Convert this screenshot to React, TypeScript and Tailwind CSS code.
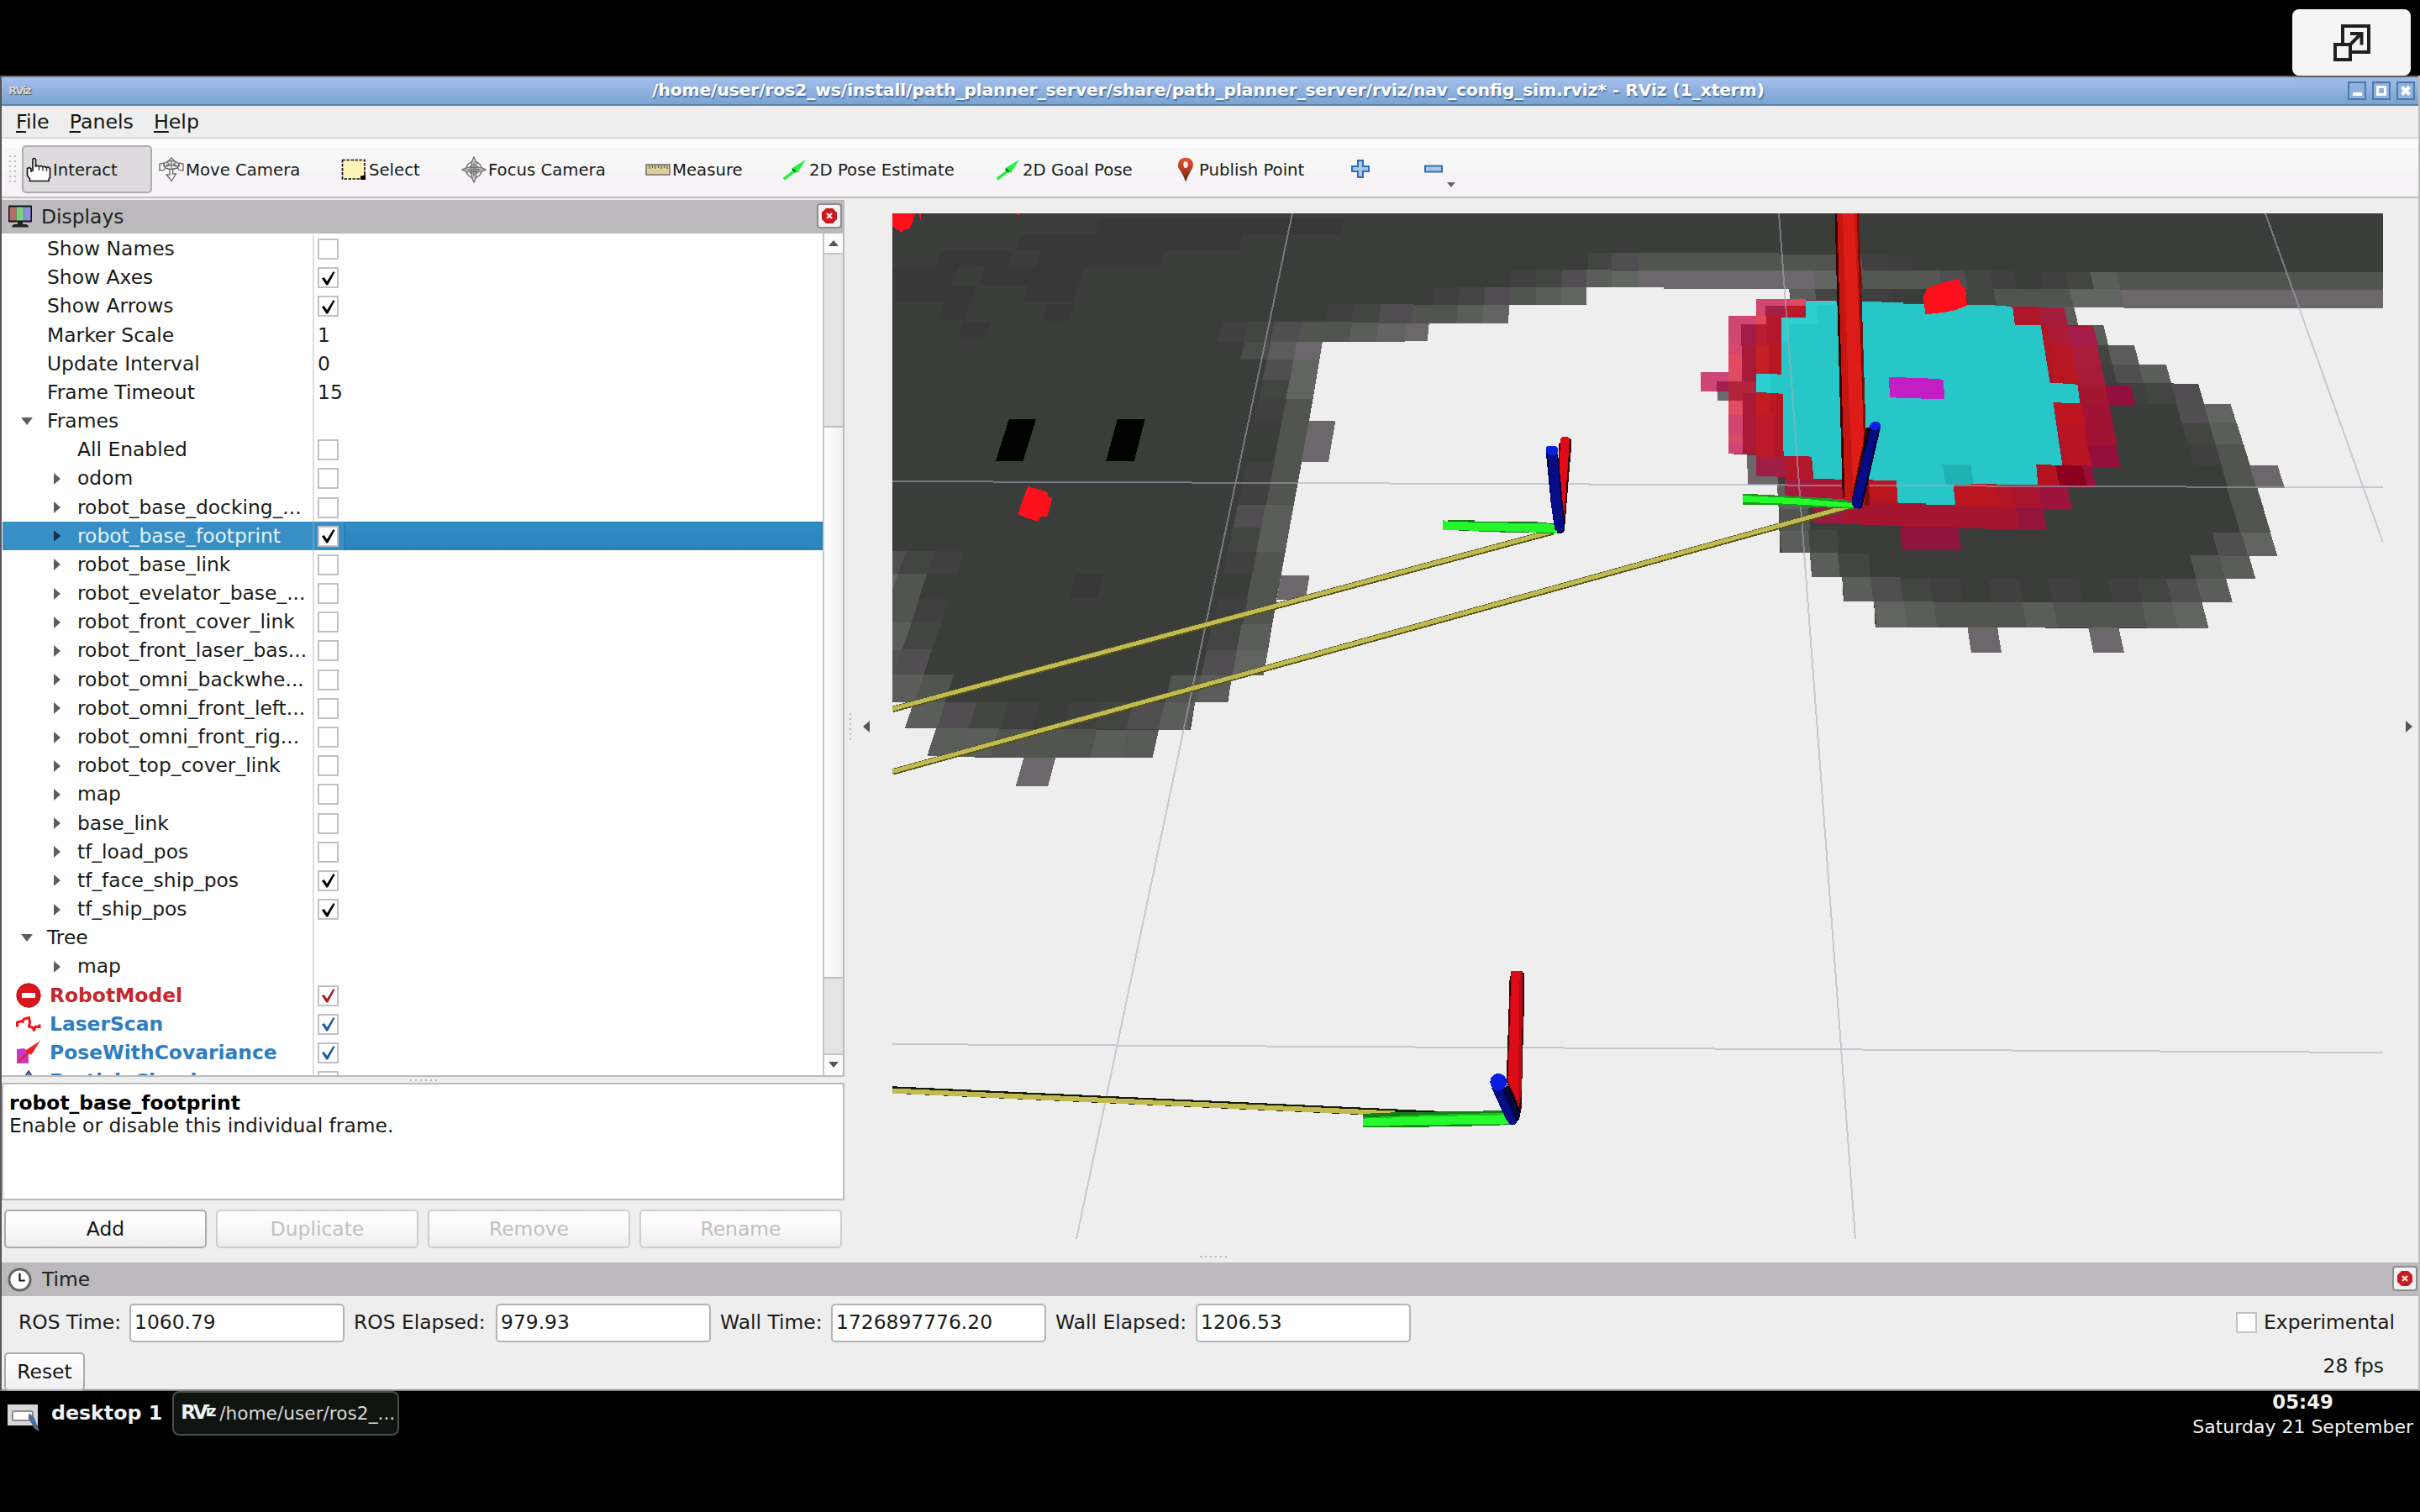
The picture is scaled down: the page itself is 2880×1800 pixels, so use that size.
import React from "react";

type Pt = [number, number];

const A = "#414041";
const B = "#434542";
const C = "#504e50";
const D = "#525450";
const E = "#5b5d5a";
const F = "#616461";
const G = "#6b676b";
const DARK = "#3b3d3a";
const DEEP = "#383838";

/* ---------- small widgets ---------- */

function Check({ on, tone = "#000" }: { on?: boolean; tone?: string }) {
  return (
    <span className="flex h-[25px] w-[25px] shrink-0 items-center justify-center border-2 border-[#c3c1c3] bg-white">
      {on && (
        <svg viewBox="0 0 20 20" className="h-[20px] w-[20px]">
          <path d="M2 10.500 L4.600 9 L8.200 14 L15.500 2.200 L17.600 3 L9.200 18.600 H7.400 Z" fill={tone} />
        </svg>
      )}
    </span>
  );
}

function CloseBtn() {
  return (
    <span className="mb-[2px] flex h-[30px] w-[30px] items-center justify-center rounded-[4px] border-2 border-[#8f8d8f] bg-[#f3f1f3]">
      <svg viewBox="0 0 20 20" className="h-[20px] w-[20px]">
        <path d="M6 1h8l5 5v8l-5 5H6l-5-5V6z" fill="#c81b1f" />
        <path d="M7 7l6 6M13 7l-6 6" stroke="#f5dede" strokeWidth="2.400" />
      </svg>
    </span>
  );
}

function PushBtn({ label, off, w }: { label: string; off?: boolean; w: string }) {
  return (
    <button
      className={`flex h-[46px] items-center justify-center rounded-[5px] border-2 bg-linear-to-b from-white via-[#fbf8fb] to-[#eeeeee] ${w} ${
        off ? "border-[#cfcdcf] text-[#bcc2bc]" : "border-[#acaaac] text-[#141714]"
      }`}
    >
      {label}
    </button>
  );
}

/* ---------- tool icons ---------- */

const HandIcon = (
  <svg viewBox="0 0 30 30" className="h-[30px] w-[30px]">
    <path
      d="M8 17V3.500Q8 1.500 9.700 1.500T11.500 3.500V11l1.500-1 2.500 1.200 2-.7 2.500 1.200 2-.5 2.500 1.300 2-.5 2 1.500V24l-1.500 2.500V28.500H4.500V26L1.500 22V13.500L4 12.500L6 14V18"
      fill="#fff"
      stroke="#1a1a1a"
      strokeWidth="1.700"
    />
    <path d="M15.500 11v5M20 11.500v5M24.500 12.500v4.500" stroke="#333" strokeWidth="1.400" />
  </svg>
);

const MoveIcon = (
  <svg viewBox="0 0 30 30" className="h-[30px] w-[30px]" fill="#f6f6f6" stroke="#6c6c6c" strokeWidth="1.300">
    <path d="M15 1l5.500 5.500-2.500 1v3l6 .5V7l5 1v8l-5-.5-1.500-2.500-5.500 1-.5 6h4L15 28.500 9 21h4v-6L7.500 13 6 15.500 1 16V8l5-1v4l6-.5v-3l-2.500-1z" />
    <ellipse cx="15" cy="9.500" rx="9" ry="5" fill="none" />
    <path d="M9 9.500h12M15 5v9" />
  </svg>
);

const SelectIcon = (
  <svg viewBox="0 0 30 26" className="h-[26px] w-[30px]">
    <rect x="1.500" y="1.500" width="26.500" height="22.500" fill="#fdf2b8" stroke="#111" strokeWidth="1.700" strokeDasharray="3.500 1.500" />
    <path d="M29 18v7h-6v-4.500q4 0 6-2.500z" fill="#000" />
  </svg>
);

const FocusIcon = (
  <svg viewBox="0 0 30 32" className="h-[32px] w-[30px]" fill="none" stroke="#777" strokeWidth="1.500">
    <circle cx="15" cy="16" r="9.500" />
    <circle cx="15" cy="16" r="5.500" />
    <path d="M15 1l2.500 6v18L15 31l-2.500-6V7zM1 16l6-2.500h16l6 2.500-6 2.500H7z" fill="#dcdcdc" fillOpacity=".6" />
    <path d="M15 8v16M7 16h16" />
  </svg>
);

const MeasureIcon = (
  <svg viewBox="0 0 30 14" className="h-[14px] w-[30px]">
    <rect x="1" y="1" width="28" height="12" fill="#dccf98" stroke="#77736a" strokeWidth="1.600" />
    <path d="M5 2v4M8.500 2v3M12 2v4M15.500 2v3M19 2v4M22.500 2v3M26 2v4" stroke="#5d5a50" strokeWidth="1.200" />
  </svg>
);

const PoseIcon = (
  <svg viewBox="0 0 30 26" className="h-[26px] w-[30px]">
    <path d="M28 1L11 11.500 13 13.500 .5 23 3 25.500 16 15.500l2 1.500z" fill="#24f23c" />
    <path d="M13 11.500l3.500 3.500-1 1.500-4.500-3.500z" fill="#0b5f16" />
  </svg>
);

const PinIcon = (
  <svg viewBox="0 0 20 30" className="h-[30px] w-[20px]">
    <defs>
      <linearGradient id="pin" x1="0" y1="0" x2="0" y2="1">
        <stop offset="0" stopColor="#e8502f" />
        <stop offset=".5" stopColor="#b23d22" />
        <stop offset="1" stopColor="#4a2a12" />
      </linearGradient>
    </defs>
    <path d="M10 29.500Q7 21 3.500 16T1 9.500Q1.500 1 10 .8 18.500 1 19 9.500q-.2 3-2.500 6.500T10 29.500z" fill="url(#pin)" />
    <ellipse cx="10" cy="9" rx="2.800" ry="4" fill="#f7e9e4" />
  </svg>
);

function Tool({ icon, label, cls, gap = "gap-[2px]" }: { icon: React.ReactNode; label: string; cls: string; gap?: string }) {
  return (
    <div className={`flex h-[57px] shrink-0 items-center whitespace-nowrap rounded-[5px] border-2 pl-[3px] pt-[1px] ${gap} ${cls}`}>
      {icon}
      <span className="pt-[1px]">{label}</span>
    </div>
  );
}

/* ---------- displays tree ---------- */

type Row = {
  t: string;
  lvl: 0 | 1 | 2;
  arrow?: "open" | "shut";
  v?: string;
  c?: 0 | 1;
  sel?: boolean;
  icon?: "err" | "laser" | "pose" | "cloud";
};

const rows: Row[] = [
  { t: "Show Names", lvl: 1, c: 0 },
  { t: "Show Axes", lvl: 1, c: 1 },
  { t: "Show Arrows", lvl: 1, c: 1 },
  { t: "Marker Scale", lvl: 1, v: "1" },
  { t: "Update Interval", lvl: 1, v: "0" },
  { t: "Frame Timeout", lvl: 1, v: "15" },
  { t: "Frames", lvl: 1, arrow: "open" },
  { t: "All Enabled", lvl: 2, c: 0 },
  { t: "odom", lvl: 2, arrow: "shut", c: 0 },
  { t: "robot_base_docking_...", lvl: 2, arrow: "shut", c: 0 },
  { t: "robot_base_footprint", lvl: 2, arrow: "shut", c: 1, sel: true },
  { t: "robot_base_link", lvl: 2, arrow: "shut", c: 0 },
  { t: "robot_evelator_base_...", lvl: 2, arrow: "shut", c: 0 },
  { t: "robot_front_cover_link", lvl: 2, arrow: "shut", c: 0 },
  { t: "robot_front_laser_bas...", lvl: 2, arrow: "shut", c: 0 },
  { t: "robot_omni_backwhe...", lvl: 2, arrow: "shut", c: 0 },
  { t: "robot_omni_front_left...", lvl: 2, arrow: "shut", c: 0 },
  { t: "robot_omni_front_rig...", lvl: 2, arrow: "shut", c: 0 },
  { t: "robot_top_cover_link", lvl: 2, arrow: "shut", c: 0 },
  { t: "map", lvl: 2, arrow: "shut", c: 0 },
  { t: "base_link", lvl: 2, arrow: "shut", c: 0 },
  { t: "tf_load_pos", lvl: 2, arrow: "shut", c: 0 },
  { t: "tf_face_ship_pos", lvl: 2, arrow: "shut", c: 1 },
  { t: "tf_ship_pos", lvl: 2, arrow: "shut", c: 1 },
  { t: "Tree", lvl: 1, arrow: "open" },
  { t: "map", lvl: 2, arrow: "shut" },
  { t: "RobotModel", lvl: 0, c: 1, icon: "err" },
  { t: "LaserScan", lvl: 0, c: 1, icon: "laser" },
  { t: "PoseWithCovariance", lvl: 0, c: 1, icon: "pose" },
  { t: "ParticleCloud", lvl: 0, c: 0, icon: "cloud" },
];

function RowIcon({ k }: { k: NonNullable<Row["icon"]> }) {
  return (
    <svg viewBox="0 0 30 30" className="h-[30px] w-[30px] shrink-0">
      {k === "err" && (
        <>
          <circle cx="15" cy="15" r="14.200" fill="#d8161c" stroke="#b01015" />
          <rect x="7" y="12" width="16" height="6" rx="1" fill="#fff" />
        </>
      )}
      {k === "laser" && (
        <path d="M1.500 18.500V13L6 11.500l2 1L9.500 9l6-1.500 1 5-1 5.500 5 1.500 1 4 1-4 1-1.500 4.500.5v-3" fill="none" stroke="#f8131a" strokeWidth="3" />
      )}
      {k === "pose" && (
        <>
          <path d="M1 11l9-1 5 5v13H1z" fill="#c23cc8" />
          <path d="M29 1L12 12l1 3L2 25l2 1.500 11.500-10 3 1z" fill="#ee2222" />
        </>
      )}
      {k === "cloud" && <path d="M15 2L23 14 15 28 7 14z" fill="#7088bd" stroke="#2c3f70" strokeWidth="1.500" />}
    </svg>
  );
}

function TreeRow({ r }: { r: Row }) {
  const tone = r.icon === "err" ? "#a81c20" : r.icon ? "#1c5f9a" : "#000";
  const text =
    r.icon === "err" ? "font-bold text-[#c4282c]" : r.icon ? "font-bold text-[#2f7dc1]" : r.sel ? "text-[#e4f1fa]" : "text-[#191c19]";
  return (
    <div className={`flex h-[34.18px] shrink-0 items-center ${r.sel ? "bg-[#388fc5]" : ""}`}>
      <div className={`flex h-full w-[371px] shrink-0 items-center border-r-2 ${r.sel ? "border-[#5aa2cf]" : "border-[#dddddd]"}`}>
        {r.lvl === 0 && (
          <div className="flex w-[56px] shrink-0 pl-[16px]">
            <RowIcon k={r.icon!} />
          </div>
        )}
        {r.lvl === 1 && (
          <div className="flex w-[53px] shrink-0 justify-end pr-[17px]">
            {r.arrow && <span className="border-x-[7px] border-t-[9px] border-x-transparent border-t-[#5b5f5b]" />}
          </div>
        )}
        {r.lvl === 2 && (
          <div className="flex w-[89px] shrink-0 justify-end pr-[20px]">
            {r.arrow && <span className={`border-y-[7px] border-l-[8px] border-y-transparent ${r.sel ? "border-l-[#15324a]" : "border-l-[#5b5f5b]"}`} />}
          </div>
        )}
        <span className={`whitespace-nowrap ${text}`}>{r.t}</span>
      </div>
      <div className="flex w-[35px] shrink-0 items-center pl-[4px]">
        {r.c !== undefined && <Check on={r.c === 1} tone={tone} />}
        {r.v && <span className="text-[#191c19]">{r.v}</span>}
      </div>
      {r.sel && <div className="h-full flex-1 border-2 border-[#2980b4] bg-linear-to-b from-[#308dc6] to-[#2c84ba]" />}
    </div>
  );
}

/* ---------- 3D scene ---------- */

const pts = (p: Pt[]) => p.map((q) => q.join(",")).join(" ");
const P = ({ p, f }: { p: Pt[]; f: string }) => <polygon points={pts(p)} fill={f} />;

type CellDef = [number, number, number, number, string];

function Cells({ list, k }: { list: CellDef[]; k: (x: number, y: number) => number }) {
  return (
    <>
      {list.map(([x0, x1, y0, y1, f], i) => {
        const h = y1 - y0;
        return <P key={i} f={f} p={[[x0, y0], [x1, y0], [x1 + k(x1, y0) * h, y1], [x0 + k(x0, y0) * h, y1]]} />;
      })}
    </>
  );
}

const kLeft = (x: number, y: number) => -0.243 + (x - (1241 - 0.243 * y)) * 0.00018;
const kMid = (x: number) => -0.14 + x * 0.00016;
const kRight = (x: number, y: number) => 0.0477 + ((x - (248 + 0.0477 * y)) * 0.1853) / (1048 + 0.1853 * y);
const flat = () => 0;

const leftCells: CellDef[] = [
  [655, 1390, 42, 84, DEEP], [420, 1085, 84, 127, DEEP], [178, 395, 127, 170, DEEP], [475, 850, 127, 170, DEEP],
  [20, 230, 170, 218, DEEP], [308, 608, 170, 218, DEEP], [20, 285, 218, 262, DEEP], [440, 590, 218, 262, DEEP],
  [187, 265, 262, 307, DEEP], [499, 577, 266, 310, DEEP], [244, 325, 314, 358, DEEP], [583, 668, 965, 1028, DEEP],
  [1345, 1422, 265, 314, A], [1422, 1502, 265, 314, B], [1502, 1600, 265, 316, C],
  [1024, 1100, 312, 363, A], [1100, 1180, 312, 363, B], [1180, 1262, 312, 363, C], [1262, 1415, 312, 363, D], [1415, 1495, 314, 363, E], [1495, 1580, 316, 363, F],
  [1090, 1170, 363, 410, "#4a4c49"], [1170, 1248, 363, 410, E], [1248, 1325, 363, 410, G],
  [1157, 1238, 410, 461, C], [1238, 1316, 410, 461, F],
  [1146, 1226, 461, 512, B], [1226, 1306, 461, 512, F],
  [1134, 1216, 512, 568, A], [1216, 1296, 512, 568, D],
  [1203, 1284, 568, 676, D], [1284, 1364, 568, 676, G],
  [1098, 1180, 676, 730, A], [1180, 1261, 676, 730, D],
  [1085, 1168, 730, 787, A], [1168, 1250, 730, 787, D],
  [1070, 1154, 787, 845, C], [1154, 1238, 787, 845, E],
  [1054, 1140, 845, 908, B], [1140, 1225, 845, 908, E],
  [1040, 1127, 908, 968, A], [1127, 1213, 908, 968, D],
  [1112, 1200, 968, 1033, D], [1200, 1286, 970, 1033, G],
  [1010, 1099, 1031, 1095, A], [1099, 1186, 1033, 1095, D],
  [992, 1082, 1095, 1163, B], [1082, 1173, 1095, 1163, E],
  [976, 1068, 1163, 1228, C], [1068, 1161, 1163, 1228, F],
  [870, 962, 1228, 1299, D], [962, 1054, 1228, 1299, E],
  [0, 72, 905, 965, C], [72, 158, 905, 965, B], [158, 248, 905, 965, A],
  [0, 52, 965, 1030, F], [48, 135, 965, 1030, D],
  [0, 112, 1030, 1092, D], [112, 200, 1030, 1092, A],
  [0, 88, 1092, 1160, E], [88, 178, 1092, 1160, B],
  [0, 60, 1160, 1227, D], [60, 150, 1160, 1227, C],
  [0, 125, 1227, 1297, E], [125, 215, 1227, 1297, D],
  [95, 190, 1297, 1366, E], [190, 285, 1297, 1366, C], [285, 380, 1297, 1366, B], [380, 472, 1297, 1366, A],
  [565, 660, 1297, 1368, A], [660, 755, 1297, 1368, B], [755, 850, 1297, 1368, C], [850, 941, 1297, 1370, E],
  [162, 258, 1366, 1438, E], [258, 352, 1366, 1440, E], [352, 645, 1368, 1441, D], [645, 740, 1370, 1441, E], [740, 832, 1370, 1441, "#585a57"],
  [426, 522, 1441, 1515, G],
  [382, 463, 563, 672, "#000200"], [708, 791, 563, 672, "#000200"],
];

const midCells: CellDef[] = [
  [868, 947, 182, 242, B], [947, 1035, 182, 242, C], [1035, 1600, 184, 246, D],
  [612, 695, 242, 306, A], [695, 782, 242, 306, B], [782, 862, 242, 306, C], [862, 947, 242, 306, E], [947, 1034, 246, 306, F], [1034, 1560, 247, 307, G],
  [355, 440, 306, 368, A], [440, 525, 306, 368, B], [525, 611, 306, 368, C], [611, 695, 306, 370, D], [695, 779, 306, 370, E], [779, 862, 306, 370, F],
  [0, 93, 366, 432, A], [93, 178, 366, 433, B], [178, 262, 366, 434, C], [262, 434, 369, 435, D], [434, 520, 369, 435, E], [520, 605, 369, 435, F],
  [0, 82, 432, 498, D], [82, 167, 434, 498, E], [167, 254, 434, 498, F], [254, 338, 435, 498, G],
];

const rightCells: CellDef[] = [
  [0, 250, 170, 231, D], [250, 430, 176, 234, D], [428, 485, 176, 231, A], [485, 538, 176, 231, "#3f3e3f"],
  [0, 325, 231, 290, G], [325, 380, 231, 290, F], [428, 598, 231, 290, "#555753"], [598, 653, 231, 290, C], [653, 708, 231, 290, B], [708, 760, 231, 290, A],
  [817, 870, 235, 292, A], [870, 925, 235, 292, B], [925, 982, 235, 292, E], [982, 1600, 235, 295, D],
  [272, 328, 290, 345, E], [328, 378, 290, 345, B], [428, 495, 290, 345, A], [655, 715, 290, 352, B], [715, 880, 290, 352, D], [880, 990, 290, 352, F], [990, 1600, 295, 356, G],
  [835, 890, 350, 412, E], [898, 954, 412, 478, E], [905, 963, 478, 542, B], [963, 1021, 478, 542, E],
  [918, 973, 542, 606, A], [973, 1030, 542, 606, C], [1030, 1090, 542, 606, E],
  [985, 1042, 606, 674, A], [1042, 1101, 606, 674, B], [1101, 1160, 608, 674, C],
  [1112, 1172, 674, 740, C], [1172, 1230, 674, 740, F], [1125, 1184, 740, 808, B], [1184, 1244, 740, 808, E],
  [1137, 1197, 808, 880, A], [1197, 1258, 808, 880, D], [1210, 1271, 880, 955, D], [1271, 1332, 880, 955, G],
  [1222, 1288, 955, 1028, D], [1237, 1302, 1028, 1102, D], [1190, 1253, 1102, 1182, C], [1253, 1316, 1102, 1182, F],
  [1142, 1205, 1180, 1257, D], [1205, 1270, 1182, 1257, E],
  [387, 449, 1252, 1333, E], [449, 513, 1252, 1333, C], [513, 577, 1256, 1337, B], [577, 642, 1256, 1337, A],
  [705, 770, 1257, 1337, A], [835, 900, 1257, 1337, A], [963, 1027, 1257, 1337, A], [1027, 1090, 1257, 1337, B], [1090, 1154, 1257, 1337, C], [1154, 1220, 1257, 1337, E],
  [456, 521, 1333, 1419, F], [521, 586, 1333, 1419, E], [586, 778, 1337, 1419, D], [778, 844, 1337, 1419, E], [844, 1037, 1337, 1420, D], [1037, 1102, 1337, 1422, E], [1102, 1168, 1337, 1423, F],
  [659, 724, 1419, 1504, G], [921, 987, 1419, 1504, G],
  [115, 172, 598, 663, G], [180, 245, 845, 945, G], [246, 312, 945, 1025, "#606160"], [249, 314, 1025, 1098, D],
  [252, 314, 1098, 1171, E], [314, 376, 1095, 1171, B], [317, 378, 1171, 1252, E], [378, 444, 1174, 1252, B],
];

const costCells: CellDef[] = [
  [201, 275, 326, 346, "#d34670"], [275, 308, 326, 346, "#e2485c"], [201, 220, 346, 382, "#d34670"], [141, 170, 382, 470, "#d04672"], [168, 201, 382, 408, "#d04672"],
  [141, 170, 470, 510, "#d6476c"], [141, 172, 510, 570, "#e04b62"], [81, 141, 568, 600, "#cc4676"], [81, 115, 598, 632, "#cc4676"], [115, 141, 598, 632, "#9f2050"],
  [141, 172, 568, 600, "#dd4a64"], [141, 200, 598, 665, "#b0243c"], [141, 178, 665, 710, "#e04c62"], [141, 182, 710, 772, "#d2466e"],
  [141, 183, 772, 808, "#d6486c"], [141, 184, 808, 840, "#cd4674"],
  [220, 258, 346, 382, "#a32048"], [258, 308, 346, 388, "#b4192c"], [201, 222, 382, 410, "#e5485a"], [222, 256, 382, 577, "#b2182a"],
  [168, 200, 408, 480, "#a01e48"], [170, 200, 480, 598, "#a81b38"], [201, 225, 410, 480, "#b81d30"], [201, 230, 480, 577, "#c42026"], [228, 256, 480, 577, "#b81622"],
  [172, 200, 638, 844, "#a81a38"], [200, 232, 638, 705, "#c41c22"], [232, 260, 638, 705, "#b81620"], [200, 240, 705, 850, "#bc1c2a"], [240, 260, 705, 850, "#b3172a"],
  [200, 262, 850, 915, "#a01d44"], [262, 321, 850, 925, "#b3172a"], [262, 325, 925, 987, "#a31a3c"],
];

const costEdge: CellDef[] = [
  [757, 812, 350, 412, "#b0172a"], [812, 868, 353, 412, "#a51c3c"], [818, 845, 412, 604, "#b21722"], [830, 875, 412, 480, "#ac1a34"], [845, 885, 480, 545, "#b81824"],
  [845, 893, 545, 606, "#b81720"], [875, 932, 416, 480, "#a41d4a"], [882, 940, 480, 545, "#aa1b3c"], [893, 948, 545, 610, "#a81b3a"], [903, 957, 610, 680, "#a3162e"],
  [957, 1012, 612, 678, "#930f3e"], [846, 905, 672, 742, "#be1420"], [854, 911, 742, 880, "#b81422"], [905, 965, 672, 742, "#a11334"], [911, 974, 742, 812, "#a01232"], [919, 980, 812, 885, "#960f3c"],
  [808, 850, 875, 945, "#b3131f"], [850, 908, 880, 950, "#8b001e"], [908, 928, 880, 955, "#98103a"],
  [322, 388, 925, 1003, "#ad1632"], [445, 506, 930, 1004, "#ba161f"], [628, 722, 942, 1017, "#bb1620"], [722, 753, 946, 1017, "#b21624"], [753, 812, 946, 1022, "#a8152e"], [812, 875, 946, 1026, "#9c133c"],
  [764, 822, 1022, 1096, "#94143e"], [512, 638, 1085, 1161, "#8f143e"], [325, 387, 1010, 1072, "#9b1840"],
];

function Scene() {
  return (
    <svg viewBox="1062 254 1774 1222" className="h-[1222px] w-[1774px]" shapeRendering="crispEdges">
      <g transform="translate(1580 240) scale(.35714 .33333)">
        <P f={DARK} p={[[0, 41], [1568, 41], [1568, 312], [1418, 308], [862, 306], [860, 370], [605, 370], [600, 435], [338, 435], [332, 498], [0, 498]]} />
        <Cells list={midCells} k={kMid} />
      </g>
      <g transform="translate(1050 240) scale(.39541 .45918)">
        <P
          f={DARK}
          p={[
            [30, 30], [1400, 30], [1400, 363], [1325, 363], [1285, 568], [1262, 676], [1186, 1035], [1148, 1228], [1052, 1228], [1040, 1299],
            [941, 1299], [928, 1370], [832, 1370], [812, 1441], [278, 1441], [278, 1437], [140, 1437], [162, 1366], [72, 1366], [93, 1297], [30, 1296],
          ]}
        />
        <Cells list={leftCells} k={kLeft} />
        <P f="#fd0f1b" p={[[30, 30], [99, 30], [92, 50], [84, 68], [75, 72], [66, 72], [58, 81], [50, 74], [42, 72], [36, 66], [30, 66]]} />
        <P f="#fd0f1b" p={[[112, 30], [116, 30], [116, 48], [113, 48]]} />
        <P f="#fd0f1b" p={[[403, 30], [412, 30], [411, 34], [405, 34]]} />
        <P f="#fd0f1b" p={[[438, 738], [455, 742], [496, 753], [500, 767], [512, 768], [503, 798], [496, 818], [480, 815], [468, 829], [440, 822], [408, 811], [422, 775]]} />
      </g>
      <g transform="translate(1980 240) scale(.54847 .35714)">
        <P
          f={DARK}
          p={[
            [0, 38], [1561, 38], [1561, 355], [1165, 355], [890, 350], [896, 412], [954, 412], [963, 478], [1021, 478], [1030, 542], [1090, 542], [1100, 606],
            [1160, 608], [1172, 674], [1230, 674], [1271, 880], [1316, 1102], [1331, 1182], [1270, 1182], [1282, 1257], [1220, 1257], [1232, 1337],
            [1168, 1337], [1181, 1423], [459, 1419], [456, 1333], [390, 1333], [387, 1252], [322, 1252], [317, 1171], [252, 1171], [248, 945], [185, 945],
            [180, 845], [172, 663], [170, 408], [200, 408], [220, 345], [275, 345], [272, 288], [0, 285],
          ]}
        />
        <Cells list={rightCells} k={kRight} />
        <P
          f="#a61530"
          p={[
            [201, 326], [308, 326], [757, 350], [868, 355], [875, 412], [932, 416], [957, 610], [965, 678], [987, 885], [928, 884], [935, 955], [875, 953],
            [882, 1026], [820, 1023], [827, 1096], [638, 1088], [513, 1082], [387, 1074], [325, 1070], [325, 990], [262, 985], [262, 918], [200, 915],
            [200, 844], [158, 844], [141, 838], [141, 382], [201, 382],
          ]}
        />
        <Cells list={costCells} k={flat} />
        <Cells list={costEdge} k={kRight} />
        <P
          f="#28c7c7"
          p={[
            [308, 330], [520, 336], [520, 341], [655, 345], [735, 346], [757, 352], [762, 411], [818, 411], [838, 604], [890, 608], [898, 612], [903, 672],
            [845, 670], [865, 880], [808, 875], [812, 944], [722, 944], [722, 940], [628, 940], [633, 1012], [568, 1010], [568, 1006], [508, 1004],
            [505, 930], [388, 926], [325, 924], [321, 850], [260, 848], [258, 642], [243, 638], [200, 636], [200, 573], [245, 573], [247, 578], [256, 577],
            [256, 386], [308, 386],
          ]}
        />
        <P f="#2bcfd1" p={[[308, 330], [378, 332], [378, 345], [332, 345], [333, 410], [275, 410], [270, 470], [256, 470], [256, 386], [308, 386]]} />
        <P f="#2bcfd1" p={[[200, 573], [232, 573], [232, 636], [200, 636]]} />
        <P f="#1fb2b2" p={[[604, 875], [666, 877], [672, 942], [612, 944]]} />
        <P f="#c41fc4" p={[[488, 586], [553, 587], [606, 593], [610, 659], [545, 656], [491, 653]]} />
      </g>
      <g stroke="#a9a9bb" strokeOpacity=".55" strokeWidth="2" fill="none">
        <path d="M1062 573L2836 580.500M1062 1243L2836 1253M1538 254L1281 1475M2117 254L2208 1475M2696 254L2836 646" />
      </g>
      <g fill="none">
        <path d="M1062 844.500L1848 633M1062 919L2205 602" stroke="#57541f" strokeWidth="7.500" />
        <path d="M1062 844L1848 632.500M1062 918.500L2205 601.500" stroke="#bfbb50" strokeWidth="5" />
        <path d="M1062 1297.500L1800 1331" stroke="#1b1a08" strokeWidth="8.500" />
        <path d="M1062 1298.500L1660 1325.500" stroke="#bfbb50" strokeWidth="6" />
      </g>
      <g transform="translate(1980 240) scale(.54847 .35714)">
        <P f="#fd0f1b" p={[[572, 288], [600, 272], [640, 257], [645, 280], [655, 290], [658, 346], [632, 362], [605, 370], [568, 376], [563, 318]]} />
        <P f="#1b9c20" p={[[171, 975], [212, 976], [388, 992], [415, 1005], [412, 1024], [300, 1017], [245, 1010], [171, 1010]]} />
        <P f="#24fb2a" p={[[171, 980], [300, 990], [412, 1006], [412, 1020], [250, 1006], [171, 1002]]} />
        <P f="#3a0302" p={[[371, 38], [384, 38], [402, 990], [388, 985]]} />
        <P f="#c31512" p={[[376, 38], [422, 38], [440, 960], [446, 1012], [393, 992]]} />
        <P f="#dd1b17" p={[[388, 38], [413, 38], [434, 760], [426, 960], [412, 990], [400, 600]]} />
        <P f="#7b0d09" p={[[419, 38], [424, 38], [438, 740], [447, 1010], [436, 1014], [434, 800]]} />
        <P f="#2a0203" p={[[440, 752], [450, 752], [420, 990], [408, 990]]} />
        <P f="#00031f" p={[[447, 755], [470, 756], [430, 1022], [408, 1010]]} />
        <P f="#050a86" p={[[449, 757], [466, 758], [426, 1024], [412, 1022], [408, 1000]]} />
        <ellipse cx="459" cy="748" rx="12" ry="15" fill="#0a1ee0" />
      </g>
      <g transform="translate(1580 240) scale(.35714 .33333)">
        <P f="#12761a" p={[[400, 1137], [490, 1137], [490, 1142], [695, 1144], [755, 1150], [765, 1185], [550, 1180], [495, 1177], [400, 1173]]} />
        <P f="#25f52b" p={[[384, 1137], [400, 1143], [755, 1151], [765, 1184], [550, 1176], [384, 1173]]} />
        <P f="#3d0205" p={[[771, 865], [800, 842], [812, 850], [812, 882], [806, 952], [795, 1100], [790, 1165], [780, 1160], [771, 940]]} />
        <P f="#df0b18" p={[[776, 848], [784, 840], [800, 840], [806, 850], [800, 950], [790, 1100], [785, 1150], [772, 940]]} />
        <P f="#020533" p={[[727, 890], [767, 900], [777, 1000], [791, 1165], [787, 1183], [765, 1185], [745, 1090]]} />
        <P f="#060b86" p={[[734, 905], [764, 905], [786, 1165], [778, 1184], [757, 1172], [744, 1080]]} />
        <P f="#0a1ee0" p={[[727, 880], [734, 872], [760, 872], [766, 880], [766, 898], [757, 906], [738, 906], [728, 896]]} />
      </g>
      <g transform="translate(1580 1130) scale(.33333)">
        <P f="#11821a" p={[[125, 588], [200, 584], [640, 576], [665, 627], [470, 633], [195, 637], [125, 637]]} />
        <P f="#1fbf26" p={[[155, 600], [340, 592], [640, 584], [665, 625], [125, 633], [125, 600]]} />
        <P f="#26fb2c" p={[[125, 605], [340, 598], [635, 592], [655, 624], [470, 625], [125, 631]]} />
        <P f="#3a0305" p={[[650, 97], [703, 82], [703, 157], [697, 360], [692, 567], [686, 600], [638, 470], [645, 265]]} />
        <P f="#b60a12" p={[[655, 77], [697, 77], [692, 500], [683, 570], [643, 470], [650, 260]]} />
        <P f="#dd0b17" p={[[657, 77], [686, 77], [680, 540], [645, 470], [655, 200]]} />
        <P f="#010214" p={[[638, 480], [660, 510], [687, 578], [685, 608], [668, 620]]} />
        <P f="#060c82" p={[[585, 495], [636, 500], [676, 600], [680, 612], [668, 627], [652, 626], [638, 610]]} />
        <P f="#040640" p={[[622, 503], [638, 488], [686, 590], [676, 618]]} />
        <circle cx="610" cy="474" r="30" fill="#0a1ee0" />
      </g>
    </svg>
  );
}

/* ---------- time panel ---------- */

function Field({ label, value, w }: { label: string; value: string; w: string }) {
  return (
    <div className={`flex shrink-0 items-center justify-between ${w}`}>
      <span className="whitespace-nowrap">{label}</span>
      <span className="flex h-[46px] w-[256px] items-center rounded-[5px] border-2 border-[#b4b4b4] bg-white pl-[4px]">{value}</span>
    </div>
  );
}

function Dots({ n, cls }: { n: number; cls: string }) {
  return (
    <div className={`flex ${cls}`}>
      {Array.from({ length: n }, (_, i) => (
        <span key={i} className="h-[2px] w-[2px] bg-[#b5b5b5]" />
      ))}
    </div>
  );
}

const winBtn = "flex h-[22px] w-[22px] items-center justify-center border-2 border-[#4d77a9] bg-[#8fb1de]";

export default function App() {
  return (
    <div className="flex h-[1800px] w-[2880px] flex-col overflow-hidden bg-black font-['DejaVu_Sans'] text-[23.4px] leading-[27px] text-[#191c19]">
      <div className="flex h-[90px] shrink-0 justify-end pr-[11px] pt-[11px]">
        <div className="relative z-10 flex h-[79px] w-[141px] items-center justify-center rounded-[8px] bg-[#f5f5f5] shadow-md">
          <svg viewBox="0 0 44 44" className="h-[44px] w-[44px]" fill="none" stroke="#202020" strokeWidth="4">
            <path d="M11 22V2h31v31H22" />
            <rect x="2" y="24" width="18" height="18" />
            <path d="M20 24L33 11M20 11h13.500v13.500" />
          </svg>
        </div>
      </div>

      <div className="flex h-[1566px] shrink-0 flex-col border-b-2 border-l-2 border-r-2 border-b-[#8a8a8a] border-l-[#555] border-r-[#bdbdbd] bg-[#eeeeee]">
        {/* title bar */}
        <div className="flex h-[36px] shrink-0 items-center border-b-2 border-t-2 border-b-[#5c82b2] border-t-[#6b6a70] bg-linear-to-b from-[#a3c0ef] via-[#8fb0de] to-[#78a4d0] pr-[4px]">
          <span className="w-[100px] pl-[8px] text-[13px] font-bold leading-[28px] tracking-[-1.500px] text-[#d8d8d8] [text-shadow:1px_1px_1px_#555]">RViz</span>
          <span className="flex-1 whitespace-nowrap pb-[3px] text-center text-[20.100px] font-bold leading-[28px] text-white [text-shadow:1px_2px_1px_#4a6c98]">
            /home/user/ros2_ws/install/path_planner_server/share/path_planner_server/rviz/nav_config_sim.rviz* - RViz (1_xterm)
          </span>
          <div className="flex w-[100px] justify-end gap-[7px]">
            <span className={winBtn}>
              <span className="mt-[8px] h-[4px] w-[11px] bg-white" />
            </span>
            <span className={winBtn}>
              <span className="h-[12px] w-[12px] border-[3px] border-white" />
            </span>
            <span className={winBtn}>
              <svg viewBox="0 0 12 12" className="h-[12px] w-[12px]">
                <path d="M1.500 1.500l9 9M10.500 1.500l-9 9" stroke="#fff" strokeWidth="4" />
              </svg>
            </span>
          </div>
        </div>

        {/* menu bar */}
        <div className="flex h-[39px] shrink-0 items-center gap-[24px] border-b-2 border-[#d6d6d6] pl-[17px] pt-[2px] text-[23.700px] text-[#141714]">
          {["File", "Panels", "Help"].map((m) => (
            <span key={m} className="leading-[27px]">
              <span className="underline decoration-2 underline-offset-[3px]">{m[0]}</span>
              {m.slice(1)}
            </span>
          ))}
        </div>

        {/* tool bar */}
        <div className="flex h-[71px] shrink-0 items-center border-b-2 border-[#c2c0c2] bg-[linear-gradient(#fefbfe_0_11px,#f6f7f6_11px_40px,#f6f2f6_40px)] pt-[3px] text-[19.700px]">
          <div className="grid w-[24px] grid-cols-2 gap-x-[4px] gap-y-[4px] pl-[9px] pr-[7px]">
            {Array.from({ length: 12 }, (_, i) => (
              <span key={i} className="h-[2px] w-[2px] bg-[#bcbcbc]" />
            ))}
          </div>
          <Tool icon={HandIcon} label="Interact" cls="mr-[3px] w-[155px] border-[#aeacae] bg-[#dddbdd]" />
          <Tool icon={MoveIcon} label="Move Camera" cls="w-[217px] border-transparent" />
          <Tool icon={SelectIcon} label="Select" gap="gap-[3px]" cls="w-[143px] border-transparent" />
          <Tool icon={FocusIcon} label="Focus Camera" cls="w-[219px] border-transparent" />
          <Tool icon={MeasureIcon} label="Measure" cls="w-[163px] border-transparent" />
          <Tool icon={PoseIcon} label="2D Pose Estimate" cls="w-[254px] border-transparent" />
          <Tool icon={PoseIcon} label="2D Goal Pose" cls="w-[216px] border-transparent" />
          <Tool icon={PinIcon} label="Publish Point" gap="gap-[6px]" cls="w-[206px] border-transparent" />
          <svg viewBox="0 0 24 24" className="ml-[5px] h-[24px] w-[24px]">
            <path d="M9 2h6v7h7v6h-7v7H9v-7H2V9h7z" fill="#a9c6e6" stroke="#2f6fb5" strokeWidth="2" />
          </svg>
          <svg viewBox="0 0 24 10" className="ml-[63px] h-[10px] w-[24px]">
            <rect x="2" y="1.500" width="20" height="7" fill="#a9c6e6" stroke="#2f6fb5" strokeWidth="2" />
          </svg>
          <span className="mt-[38px] ml-[4px] border-x-[5px] border-t-[6px] border-x-transparent border-t-[#666]" />
        </div>

        {/* centre */}
        <div className="flex h-[1267px] shrink-0">
          <div className="flex w-[1003px] shrink-0 flex-col pt-[2px]">
            <div className="flex h-[40px] shrink-0 items-center bg-[#bbb9bb] pl-[7px] pr-[3px]">
              <svg viewBox="0 0 30 30" className="h-[30px] w-[30px]">
                <rect x="1" y="1.500" width="28" height="20" rx="1" fill="#111" />
                <rect x="2.500" y="3.500" width="8" height="16" fill="#b96a6a" />
                <rect x="10.500" y="3.500" width="9" height="16" fill="#79cf82" />
                <rect x="19.500" y="3.500" width="8" height="16" fill="#8f8fe2" />
                <path d="M12 21h6v3h4q3 1 3 3.500H5Q5 25 8 24h4z" fill="#222" />
              </svg>
              <span className="ml-[10px] flex-1 text-[#202320]">Displays</span>
              <CloseBtn />
            </div>

            <div className="flex h-[1004px] shrink-0 border-b-2 border-r-2 border-[#bcbcbc] bg-white">
              <div className="flex flex-1 flex-col overflow-hidden pl-[1px] pt-[1.500px]">
                {rows.map((r, i) => (
                  <TreeRow key={i} r={r} />
                ))}
              </div>
              <div className="flex w-[24px] shrink-0 flex-col border-l-2 border-[#c6c6c6] bg-[#e4e4e4]">
                <div className="flex h-[25px] items-center justify-center border-b-2 border-[#c6c6c6] bg-[#fafafa]">
                  <span className="border-x-[6px] border-b-[7px] border-x-transparent border-b-[#555]" />
                </div>
                <div className="mt-[204px] h-[658px] border-y-2 border-[#bcbcbc] bg-linear-to-r from-[#fefefe] to-[#f2f0f2]" />
                <div className="mt-auto flex h-[26px] items-center justify-center border-t-2 border-[#c6c6c6] bg-[#fafafa]">
                  <span className="mb-[2px] border-x-[6px] border-t-[7px] border-x-transparent border-t-[#555]" />
                </div>
              </div>
            </div>

            <div className="flex h-[7px] shrink-0 items-center justify-center">
              <Dots n={6} cls="gap-[4px]" />
            </div>
            <div className="h-[140px] shrink-0 border-2 border-[#bcbcbc] bg-white pl-[7px] pt-[9px] text-[#191c19]">
              <div className="font-bold text-black">robot_base_footprint</div>
              <div>Enable or disable this individual frame.</div>
            </div>
            <div className="mt-[11px] flex gap-[11px] pl-[3px]">
              <PushBtn label="Add" w="w-[241px]" />
              <PushBtn label="Duplicate" off w="w-[241px]" />
              <PushBtn label="Remove" off w="w-[241px]" />
              <PushBtn label="Rename" off w="w-[241px]" />
            </div>
          </div>

          <div className="flex w-[57px] shrink-0 items-center gap-[14px] pb-[10px] pl-[6px]">
            <Dots n={6} cls="flex-col gap-[4px]" />
            <span className="border-y-[7px] border-r-[8px] border-y-transparent border-r-[#555]" />
          </div>
          <div className="flex flex-1 flex-col pt-[18px]">
            <Scene />
            <Dots n={6} cls="mt-[19px] gap-[4px] pl-[366px]" />
          </div>
          <div className="flex w-[42px] shrink-0 items-center justify-center pb-[10px] pl-[20px]">
            <span className="border-y-[7px] border-l-[8px] border-y-transparent border-l-[#555]" />
          </div>
        </div>

        {/* time panel */}
        <div className="flex h-[40px] shrink-0 items-center bg-[#bbb9bb] pl-[7px] pr-[1px]">
          <svg viewBox="0 0 30 30" className="h-[29px] w-[29px]">
            <circle cx="15" cy="15" r="13" fill="#fff" stroke="#666" strokeWidth="3" />
            <path d="M15 7v9h6.500" fill="none" stroke="#111" strokeWidth="2.200" />
          </svg>
          <span className="ml-[12px] flex-1 text-[#202320]">Time</span>
          <CloseBtn />
        </div>
        <div className="flex h-[63px] shrink-0 items-center pl-[20px]">
          <Field label="ROS Time:" value="1060.79" w="mr-[11px] w-[388px]" />
          <Field label="ROS Elapsed:" value="979.93" w="mr-[11px] w-[425px]" />
          <Field label="Wall Time:" value="1726897776.20" w="mr-[11px] w-[388px]" />
          <Field label="Wall Elapsed:" value="1206.53" w="w-[423px]" />
          <div className="ml-auto flex items-center gap-[8px] pr-[28px]">
            <Check />
            <span>Experimental</span>
          </div>
        </div>
        <div className="flex flex-1 items-start justify-between pl-[3px] pr-[41px] pt-[4px]">
          <PushBtn label="Reset" w="w-[96px]" />
          <span className="pt-[3px]">28 fps</span>
        </div>
      </div>

      {/* task bar */}
      <div className="flex flex-1 items-start justify-between pl-[9px] pr-[8px] text-[#f2f2f2]">
        <div className="flex">
          <svg viewBox="0 0 38 34" className="mt-[15px] h-[34px] w-[38px]">
            <rect x="0" y="1" width="36" height="25" fill="#d9d7dc" />
            <rect x="6" y="9" width="24" height="11" rx="2" fill="#fff" stroke="#8a8a8a" strokeWidth="2" />
            <path d="M26 12l5 4 6 16-4-2-8-13z" fill="#3d6fb5" stroke="#7d6a50" />
          </svg>
          <span className="ml-[14px] mt-[13px] text-[23.700px] font-bold">desktop 1</span>
          <div className="ml-[12px] flex h-[53px] w-[270px] items-center rounded-[8px] border-2 border-[#4b4d4b] bg-[#101410] pl-[8px]">
            <span className="w-[46px] text-[23px] font-bold tracking-[-3px]">
              RV<span className="relative -top-[3px] text-[17px]">iz</span>
            </span>
            <span className="whitespace-nowrap text-[21.700px] text-[#dadada]">/home/user/ros2_...</span>
          </div>
        </div>
        <div className="flex flex-col items-center">
          <span className="text-[22.800px] font-bold leading-[27px]">05:49</span>
          <span className="text-[22px] leading-[31px]">Saturday 21 September</span>
        </div>
      </div>
    </div>
  );
}
